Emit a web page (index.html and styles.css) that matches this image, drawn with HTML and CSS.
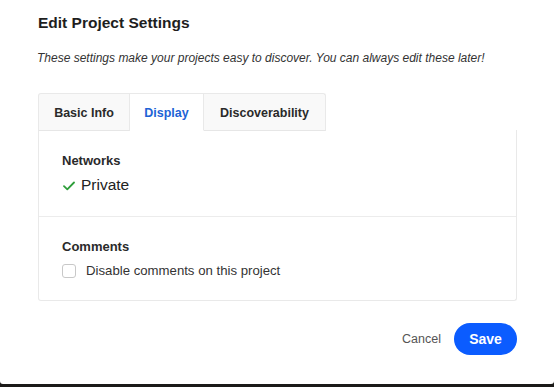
FILE: index.html
```html
<!DOCTYPE html>
<html>
<head>
<meta charset="utf-8">
<link rel="stylesheet" href="styles.css">
</head>
<body>
<div class="modal">
  <h1 class="title">Edit Project Settings</h1>
  <p class="subtitle">These settings make your projects easy to discover. You can always edit these later!</p>
  <div class="tabs">
    <div class="tab">Basic Info</div>
    <div class="tab active">Display</div>
    <div class="tab">Discoverability</div>
  </div>
  <div class="panel">
    <div class="section">
      <div class="label">Networks</div>
      <div class="network">
        <svg class="check" width="12" height="10" viewBox="0 0 12 10"><path d="M1 5.2 L4.3 8.3 L11 1.5" fill="none" stroke="#2e9e3a" stroke-width="1.8" stroke-linecap="round" stroke-linejoin="round"/></svg>
        <span>Private</span>
      </div>
    </div>
    <div class="section">
      <div class="label">Comments</div>
      <label class="option"><span class="box"></span><span>Disable comments on this project</span></label>
    </div>
  </div>
  <div class="footer">
    <button class="cancel">Cancel</button>
    <button class="save">Save</button>
  </div>
</div>
</body>
</html>
```
FILE: styles.css
```css
html, body { margin: 0; padding: 0; }
body {
  background: #1b1a18;
  width: 554px;
  height: 387px;
  overflow: hidden;
  font-family: "Liberation Sans", Arial, sans-serif;
  color: #222;
}
.modal {
  background: #fff;
  height: 384px;
  box-sizing: border-box;
  border-radius: 0 0 3px 3px;
  padding: 13px 38px 0 38px;
}
.title {
  margin: 0;
  font-size: 15.5px;
  font-weight: bold;
  line-height: 20px;
  color: #1e1e1e;
}
.subtitle {
  margin: 17px 0 0 -1px;
  font-size: 12px;
  font-style: italic;
  line-height: 16px;
  color: #333;
}
.tabs {
  display: flex;
  margin-top: 27px;
}
.tab {
  box-sizing: border-box;
  height: 38px;
  padding: 2px 0 0 0;
  display: flex;
  align-items: center;
  justify-content: center;
  white-space: nowrap;
  font-size: 12.5px;
  font-weight: bold;
  color: #2a2a2a;
  background: #f9f9f9;
  border: 1px solid #e9e9e9;
  border-bottom: 1px solid #e6e6e6;
  border-left: none;
}
.tab:first-child { border-left: 1px solid #e9e9e9; border-top-left-radius: 3px; width: 92px; }
.tab:nth-child(2) { width: 74px; }
.tab:last-child { border-top-right-radius: 3px; width: 122px; }
.tab.active {
  background: #fff;
  color: #1d63d6;
  border-bottom-color: #fff;
}
.panel {
  border: 1px solid #e9e9e9;
  border-top: none;
  border-radius: 0 0 3px 3px;
  width: 479px;
  box-sizing: border-box;
  margin-top: -1px;
}
.section {
  padding: 23px 23px 0 23px;
  height: 86px;
  box-sizing: border-box;
}
.section + .section {
  border-top: 1px solid #ececec;
  height: 84px;
  padding-top: 22px;
}
.label {
  font-size: 13px;
  font-weight: bold;
  color: #2a2a2a;
  line-height: 16px;
}
.network {
  display: flex;
  align-items: center;
  margin-top: 5px;
  font-size: 15.5px;
  color: #222;
  line-height: 22px;
}
.check { margin: 2px 6px 0 1px; }
.option {
  display: flex;
  align-items: center;
  margin-top: 6px;
  font-size: 13.2px;
  color: #333;
  line-height: 20px;
}
.box {
  width: 12px;
  height: 12px;
  border: 1px solid #c8c8c8;
  border-radius: 3px;
  margin-right: 10px;
  background: #fff;
}
.footer {
  display: flex;
  justify-content: flex-end;
  align-items: center;
  margin-top: 22px;
  width: 479px;
  gap: 13px;
}
.cancel {
  background: none;
  border: none;
  font-family: inherit;
  font-size: 12.5px;
  color: #555;
  padding: 0;
  cursor: pointer;
}
.save {
  background: #0b5cff;
  color: #fff;
  border: none;
  border-radius: 16px;
  width: 63px;
  height: 32px;
  font-family: inherit;
  font-weight: bold;
  font-size: 14px;
  padding: 0;
  cursor: pointer;
}
```
